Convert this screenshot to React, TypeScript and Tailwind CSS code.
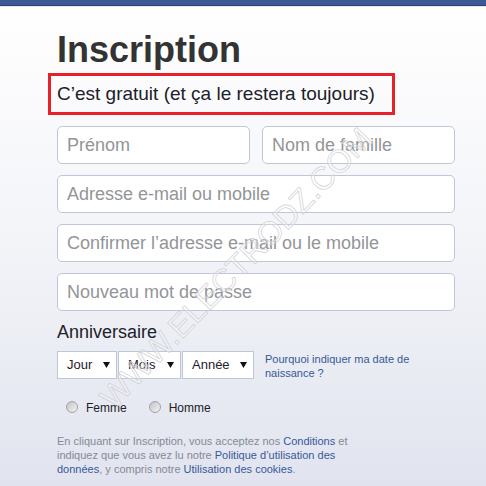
const inputCls =
  "h-[38px] rounded-[5px] border border-[#bdc7d8] bg-white pl-[9px] text-[18px] text-[#1d2129] placeholder:text-[#939598] outline-none";

function Arrow() {
  return (
    <svg width="7" height="6" viewBox="0 0 7 6" className="shrink-0">
      <polygon points="0,0 7,0 3.5,6" fill="#111" />
    </svg>
  );
}

function FakeSelect({ label, width }: { label: string; width: string }) {
  return (
    <div
      className={`${width} h-[28px] flex items-center justify-between border border-[#bdc7d8] bg-white pl-[9px] pr-[6px] text-[13px] text-[#1d2129]`}
    >
      <span>{label}</span>
      <Arrow />
    </div>
  );
}

function Radio({ label }: { label: string }) {
  return (
    <label className="flex items-start">
      <span className="mt-[1px] w-[12px] h-[12px] rounded-full border border-[#a2a2a6] bg-gradient-to-br from-[#c4c4c8] via-[#dcdcdf] to-[#f4f4f6]" />
      <span className="ml-[8px] text-[12px] leading-[16px] text-[#1d2129]">{label}</span>
    </label>
  );
}

export default function App() {
  return (
    <div className="relative w-[486px] h-[486px] overflow-hidden bg-gradient-to-b from-white via-[#f3f4f8] to-[#e1e4ef] font-['Liberation_Sans',Arial,sans-serif]">
      <div className="h-[6px] bg-[#3b5998] border-b border-[#2d4373]" />
      <div className="h-px bg-[#e3e5ea]" />

      <div className="pl-[57px] pr-[31px]">
        <h1 className="mt-[25px] text-[36px] leading-[36px] font-bold text-[#333333]">Inscription</h1>

        <div className="-ml-[9px] mt-[5px] w-[347px] h-[42px] border-[3px] border-[#e8202a] flex items-center pl-[6px]">
          <span className="text-[19px] leading-[36px] text-[#1d2129]">
            C’est gratuit (et ça le restera toujours)
          </span>
        </div>

        <div className="mt-[11px] flex flex-col gap-[11px]">
          <div className="grid grid-cols-2 gap-[12px]">
            <input className={inputCls} placeholder="Prénom" />
            <input className={inputCls} placeholder="Nom de famille" />
          </div>
          <input className={inputCls} placeholder="Adresse e-mail ou mobile" />
          <input className={inputCls} placeholder="Confirmer l’adresse e-mail ou le mobile" />
          <input className={inputCls} placeholder="Nouveau mot de passe" />
        </div>

        <div className="mt-[10px] text-[18px] leading-[22px] text-[#1d2129]">Anniversaire</div>

        <div className="mt-[8px] flex items-start">
          <div className="flex gap-px">
            <FakeSelect label="Jour" width="w-[60px]" />
            <FakeSelect label="Mois" width="w-[63px]" />
            <FakeSelect label="Année" width="w-[72px]" />
          </div>
          <a className="ml-[11px] mt-[1px] w-[170px] text-[11px] leading-[14px] text-[#365899]">
            Pourquoi indiquer ma date de
            <br />
            naissance ?
          </a>
        </div>

        <div className="mt-[20px] pl-[9px] flex gap-[22px]">
          <Radio label="Femme" />
          <Radio label="Homme" />
        </div>

        <p className="mt-[18px] text-[11px] leading-[14px] text-[#858a93]">
          En cliquant sur Inscription, vous acceptez nos <a className="text-[#365899]">Conditions</a> et
          <br />
          indiquez que vous avez lu notre{" "}
          <a className="text-[#365899]">Politique d’utilisation des</a>
          <br />
          <a className="text-[#365899]">données</a>, y compris notre{" "}
          <a className="text-[#365899]">Utilisation des cookies</a>.
        </p>
      </div>

      {/* watermark */}
      <div className="pointer-events-none absolute left-[236px] top-[268px] -translate-x-1/2 -translate-y-1/2 -rotate-[46deg] whitespace-nowrap text-[32px] leading-none text-white/30 [-webkit-text-stroke:0.7px_#d0d0d4]">
        WWW.ELECTRODZ.COM
      </div>
    </div>
  );
}
